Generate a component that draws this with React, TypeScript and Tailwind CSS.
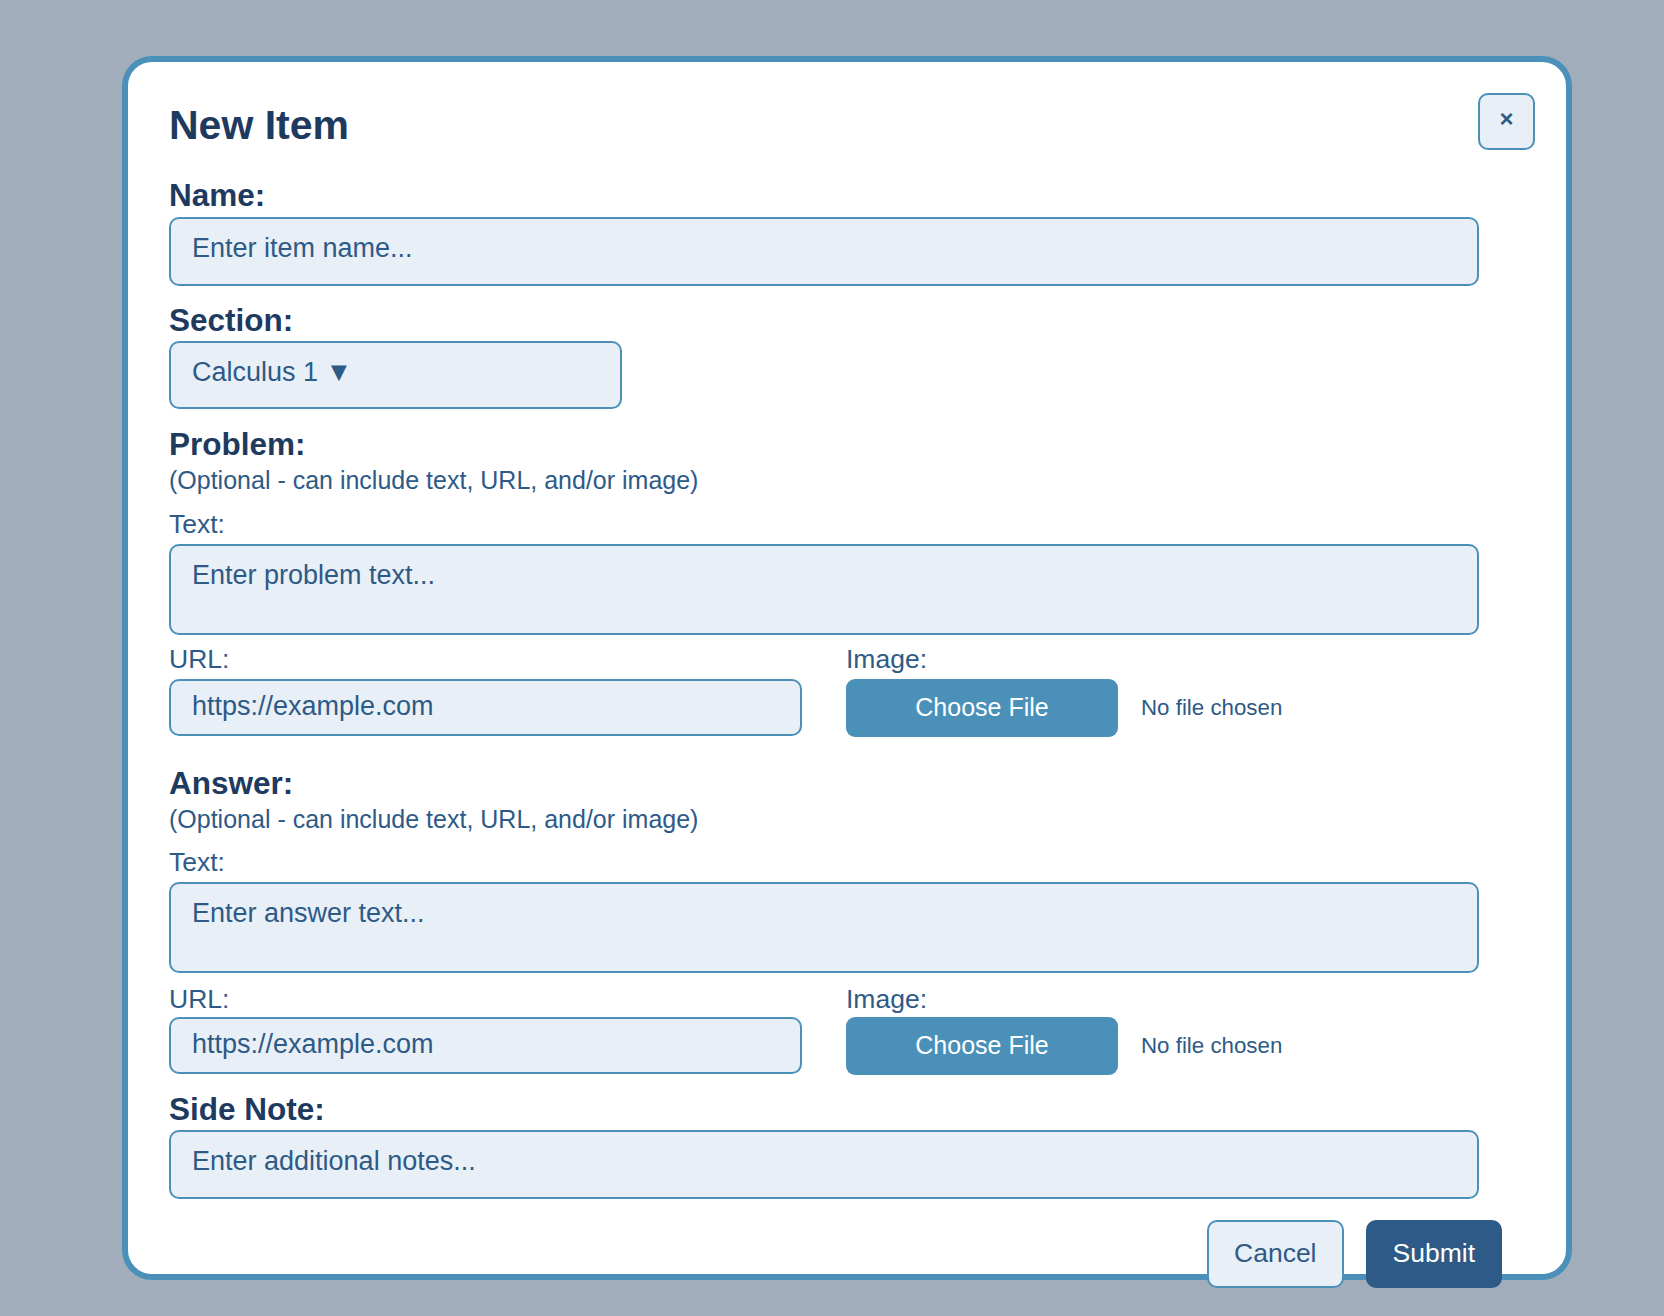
import React from 'react';

const inputBase =
  'block rounded-[10px] border-2 border-[#4a90b9] bg-[#e8eff6] pl-[21px] text-[27px] leading-[31px] text-[#2e5a87] placeholder:text-[#2e5a87] outline-none';

const Label: React.FC<{ children: React.ReactNode; className?: string }> = ({ children, className = '' }) => (
  <div className={`text-[31.5px] leading-[36px] font-bold text-[#1e3a5f] ${className}`}>{children}</div>
);

const SubLabel: React.FC<{ children: React.ReactNode; className?: string }> = ({ children, className = '' }) => (
  <div className={`text-[26.5px] leading-[29px] text-[#2e5a87] ${className}`}>{children}</div>
);

const Optional: React.FC = () => (
  <div className="mt-[4px] text-[25px] leading-[28px] text-[#2e5a87]">
    (Optional - can include text, URL, and/or image)
  </div>
);

const UrlImageRow: React.FC<{ top: string; gap: string }> = ({ top, gap }) => (
  <div className={`grid w-[1310px] grid-cols-2 gap-x-[44px] ${top}`}>
    <div>
      <SubLabel>URL:</SubLabel>
      <input
        type="text"
        placeholder="https://example.com"
        className={`${inputBase} ${gap} h-[57px] w-full pt-[10px] pb-[12px]`}
      />
    </div>
    <div>
      <SubLabel>Image:</SubLabel>
      <div className={`flex items-center ${gap}`}>
        <button className="h-[58px] w-[272px] rounded-[9px] bg-[#4a90b9] text-[25px] text-white">
          Choose File
        </button>
        <span className="ml-[23px] text-[22.3px] text-[#2e5a87]">No file chosen</span>
      </div>
    </div>
  </div>
);

export default function App() {
  return (
    <div className="min-h-screen bg-[#a2adbc] pt-[56px] pl-[122px] font-['Liberation_Sans',Arial,sans-serif]">
      <div className="relative h-[1224px] w-[1450px] rounded-[30px] border-[6px] border-[#4a90b9] bg-white pt-[40px] pr-[64px] pl-[41px]">
        <button className="absolute top-[31px] right-[31px] flex h-[57px] w-[57px] items-center justify-center rounded-[10px] border-2 border-[#4a90b9] bg-[#e8eff6] pb-[6px] text-[24px] font-bold text-[#2e5a87]">
          ×
        </button>

        <h2 className="text-[41px] leading-[46px] font-bold text-[#1e3a5f]">New Item</h2>

        <Label className="mt-[29px]">Name:</Label>
        <input
          type="text"
          placeholder="Enter item name..."
          className={`${inputBase} mt-[4px] h-[69px] w-[1310px] pt-[14px] pb-[20px]`}
        />

        <Label className="mt-[16px]">Section:</Label>
        <button className="mt-[3px] flex h-[68px] w-[453px] items-start rounded-[10px] border-2 border-[#4a90b9] bg-[#e8eff6] pt-[14px] pl-[21px] text-[27px] leading-[31px] text-[#2e5a87]">
          Calculus 1 ▼
        </button>

        <Label className="mt-[17px]">Problem:</Label>
        <Optional />
        <SubLabel className="mt-[16px]">Text:</SubLabel>
        <textarea
          placeholder="Enter problem text..."
          className={`${inputBase} mt-[5px] h-[91px] w-[1310px] resize-none pt-[14px]`}
        />
        <UrlImageRow top="mt-[10px]" gap="mt-[5px]" />

        <Label className="mt-[28px]">Answer:</Label>
        <Optional />
        <SubLabel className="mt-[15px]">Text:</SubLabel>
        <textarea
          placeholder="Enter answer text..."
          className={`${inputBase} mt-[5px] h-[91px] w-[1310px] resize-none pt-[14px]`}
        />
        <UrlImageRow top="mt-[12px]" gap="mt-[3px]" />

        <Label className="mt-[16px]">Side Note:</Label>
        <input
          type="text"
          placeholder="Enter additional notes..."
          className={`${inputBase} mt-[3px] h-[69px] w-[1310px] pt-[14px] pb-[20px]`}
        />

        <div className="mt-[21px] flex justify-end gap-[22px]">
          <button className="h-[68px] rounded-[10px] border-2 border-[#4a90b9] bg-[#e8eff6] px-[25px] text-[26.5px] text-[#2e5a87]">
            Cancel
          </button>
          <button className="h-[68px] rounded-[10px] border-2 border-[#2e5a87] bg-[#2e5a87] px-[25px] text-[26.5px] text-white">
            Submit
          </button>
        </div>
      </div>
    </div>
  );
}
